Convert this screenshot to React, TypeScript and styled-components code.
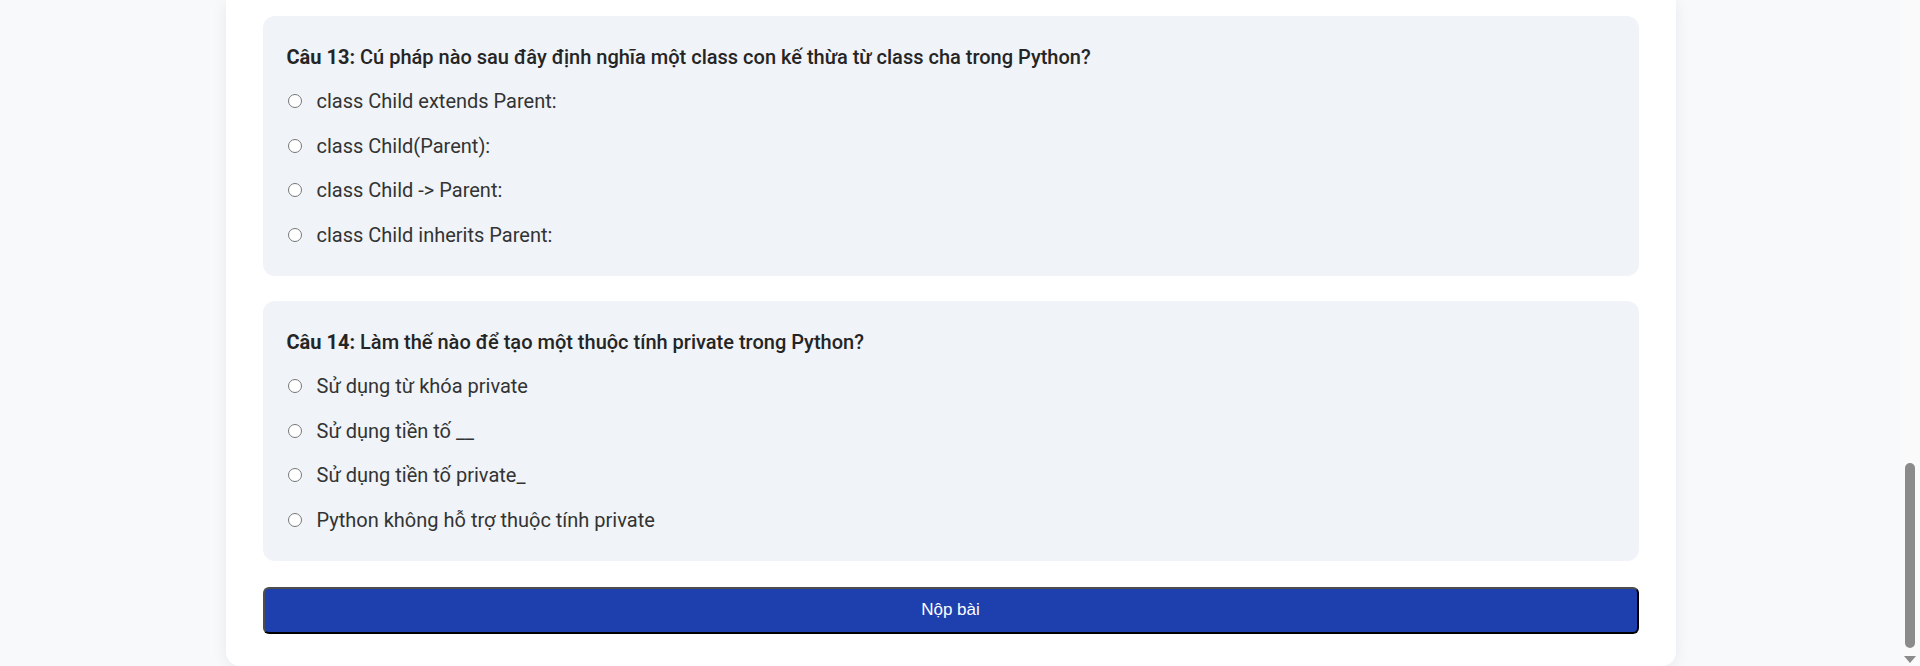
import React from "react";
import styled, { createGlobalStyle } from "styled-components";

const GlobalStyle = createGlobalStyle`
  body {
    margin: 0;
    background: #f8f9fb;
    font-family: Roboto, "Noto Sans", Arial, sans-serif;
  }
`;

const Page = styled.div`
  display: flex;
  height: 666px;
  overflow: hidden;
`;

const Main = styled.div`
  flex: 1;
  display: flex;
  justify-content: center;
`;

const ScrollTrack = styled.div`
  width: 19px;
  flex: none;
  background: #fafafa;
  display: flex;
  flex-direction: column;
  align-items: flex-start;
  padding: 463px 0 0 4px;
  box-sizing: border-box;
`;

const ScrollThumb = styled.div`
  width: 10px;
  height: 185px;
  border-radius: 5px;
  background: #8b8b8b;
`;

const ScrollArrow = styled.div`
  margin-top: 8px;
  width: 0;
  height: 0;
  margin-left: -1px;
  border-left: 6px solid transparent;
  border-right: 6px solid transparent;
  border-top: 7px solid #8b8b8b;
`;

const Card = styled.main`
  width: 1450px;
  box-sizing: border-box;
  background: #ffffff;
  padding: 16px 37px 32px 37px;
  border-radius: 0 0 14px 14px;
  box-shadow: 0 2px 16px rgba(15, 23, 42, 0.07);
  display: flex;
  flex-direction: column;
`;

const QuestionBox = styled.section<{ $gapAfter: number }>`
  background: #f0f3f8;
  border-radius: 12px;
  padding: 25px 24px 27px 24px;
  margin-bottom: ${(p) => p.$gapAfter}px;
`;

const Title = styled.p`
  margin: 0 0 14px 0;
  font-size: 20px;
  line-height: 32px;
  font-weight: 500;
  color: #252525;
`;

const Num = styled.strong`
  font-weight: 700;
`;

const Options = styled.div`
  display: flex;
  flex-direction: column;
  gap: 16.5px;
`;

const OptionLabel = styled.label`
  display: flex;
  align-items: center;
  height: 28px;
  font-size: 20px;
  line-height: 28px;
  color: #333333;
  cursor: pointer;
`;

const Radio = styled.input`
  width: 14px;
  height: 14px;
  margin: 0 15px 0 1px;
  flex: none;
`;

const SubmitButton = styled.button`
  height: 48.5px;
  width: 100%;
  background: #1e40af;
  color: #ffffff;
  border-width: 2px;
  border-style: solid;
  border-color: #4d4d4d #000000 #000000 #4d4d4d;
  border-radius: 6px;
  font-family: "Liberation Sans", Arial, sans-serif;
  font-size: 17px;
  cursor: pointer;
`;

type Q = { num: number; text: string; options: string[] };

const questions: Q[] = [
  {
    num: 13,
    text: "Cú pháp nào sau đây định nghĩa một class con kế thừa từ class cha trong Python?",
    options: [
      "class Child extends Parent:",
      "class Child(Parent):",
      "class Child -> Parent:",
      "class Child inherits Parent:",
    ],
  },
  {
    num: 14,
    text: "Làm thế nào để tạo một thuộc tính private trong Python?",
    options: [
      "Sử dụng từ khóa private",
      "Sử dụng tiền tố __",
      "Sử dụng tiền tố private_",
      "Python không hỗ trợ thuộc tính private",
    ],
  },
];

export default function App() {
  return (
    <>
      <GlobalStyle />
      <Page>
        <Main>
          <Card>
            {questions.map((q, i) => (
              <QuestionBox key={q.num} $gapAfter={i === questions.length - 1 ? 26 : 25.5}>
                <Title>
                  <Num>Câu {q.num}:</Num> {q.text}
                </Title>
                <Options>
                  {q.options.map((o, j) => (
                    <OptionLabel key={j}>
                      <Radio type="radio" name={`q${q.num}`} value={j} />
                      {o}
                    </OptionLabel>
                  ))}
                </Options>
              </QuestionBox>
            ))}
            <SubmitButton type="button">Nộp bài</SubmitButton>
          </Card>
        </Main>
        <ScrollTrack aria-hidden="true">
          <ScrollThumb />
          <ScrollArrow />
        </ScrollTrack>
      </Page>
    </>
  );
}
